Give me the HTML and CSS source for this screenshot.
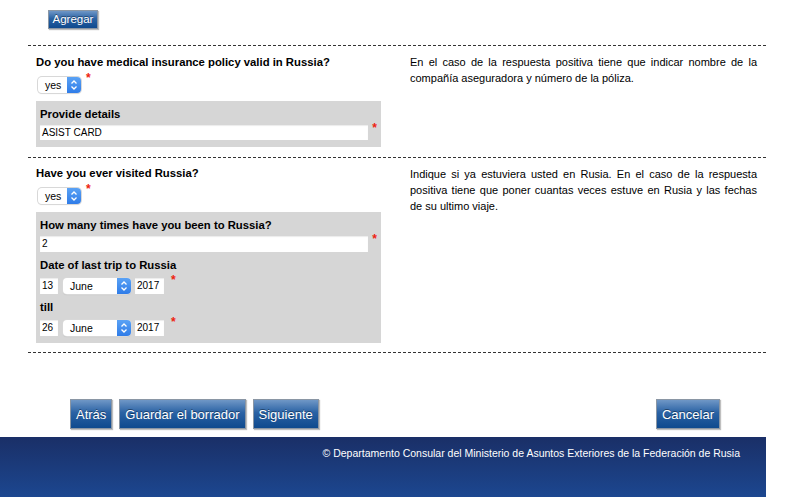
FILE: index.html
```html
<!DOCTYPE html>
<html>
<head>
<meta charset="UTF-8">
<title>Anketa</title>
<link rel="stylesheet" href="styles.css">
</head>
<body>

<div class="page">
	<div class="top">
		<button type="button" class="btn btn-small">Agregar</button>
	</div>

	<!-- seguro medico -->
	<div class="section section-1">
		<div class="left">
			<div class="question">Do you have medical insurance policy valid in Russia?</div>
			<div class="sel-row">
				<span class="sel sel-yes">yes<span class="sel-arrow"><svg width="8" height="12" viewBox="0 0 8 12"><path d="M1.5 4.5 L4 2 L6.5 4.5 M1.5 7.5 L4 10 L6.5 7.5" fill="none" stroke="#fff" stroke-width="1.3"/></svg></span></span>
				<span class="req">*</span>
			</div>
			<div class="graybox">
				<div class="sub">Provide details</div>
				<div class="field-row">
					<span class="txt txt-wide">ASIST CARD</span>
					<span class="req">*</span>
				</div>
			</div>
		</div>
		<div class="help">En el caso de la respuesta positiva tiene que indicar nombre de la compañía aseguradora y número de la póliza.</div>
	</div>

	<!-- visitas -->
	<div class="section section-2">
		<div class="left">
			<div class="question">Have you ever visited Russia?</div>
			<div class="sel-row">
				<span class="sel sel-yes">yes<span class="sel-arrow"><svg width="8" height="12" viewBox="0 0 8 12"><path d="M1.5 4.5 L4 2 L6.5 4.5 M1.5 7.5 L4 10 L6.5 7.5" fill="none" stroke="#fff" stroke-width="1.3"/></svg></span></span>
				<span class="req">*</span>
			</div>
			<div class="graybox">
				<div class="sub">How many times have you been to Russia?</div>
				<div class="field-row">
					<span class="txt txt-wide txt-tall">2</span>
					<span class="req">*</span>
				</div>
				<div class="sub sub-gap">Date of last trip to Russia</div>
				<div class="date-row">
					<span class="txt txt-day">13</span>
					<span class="sel sel-month">June<span class="sel-arrow"><svg width="8" height="12" viewBox="0 0 8 12"><path d="M1.5 4.5 L4 2 L6.5 4.5 M1.5 7.5 L4 10 L6.5 7.5" fill="none" stroke="#fff" stroke-width="1.3"/></svg></span></span>
					<span class="txt txt-year">2017</span>
					<span class="req">*</span>
				</div>
				<div class="sub sub-gap">till</div>
				<div class="date-row">
					<span class="txt txt-day">26</span>
					<span class="sel sel-month">June<span class="sel-arrow"><svg width="8" height="12" viewBox="0 0 8 12"><path d="M1.5 4.5 L4 2 L6.5 4.5 M1.5 7.5 L4 10 L6.5 7.5" fill="none" stroke="#fff" stroke-width="1.3"/></svg></span></span>
					<span class="txt txt-year">2017</span>
					<span class="req">*</span>
				</div>
			</div>
		</div>
		<div class="help">Indique si ya estuviera usted en Rusia. En el caso de la respuesta positiva tiene que poner cuantas veces estuve en Rusia y las fechas de su ultimo viaje.</div>
	</div>
	<div class="section-end"></div>

	<div class="buttons">
		<div class="btn-group">
			<button type="button" class="btn">Atrás</button>
			<button type="button" class="btn">Guardar el borrador</button>
			<button type="button" class="btn">Siguiente</button>
		</div>
		<button type="button" class="btn">Cancelar</button>
	</div>

	<div class="footer">© Departamento Consular del Ministerio de Asuntos Exteriores de la Federación de Rusia</div>
</div>

</body>
</html>
```

FILE: styles.css
```css
body
{
	margin: 0;
	background-color: #fff;
	font-family: "Liberation Sans", Arial, sans-serif;
	color: #000;
}
.page { width: 766px; }

.top { height: 45px; padding-left: 48px; padding-top: 9px; box-sizing: border-box; }

.btn
{
	font-family: "Liberation Sans", Arial, sans-serif;
	font-size: 13px;
	color: #fff;
	height: 30px;
	padding: 0 5px;
	border: 1px solid #8a96a4;
	border-radius: 0;
	background: linear-gradient(#6f97c6, #2a62a4 45%, #0f4a8e);
	text-shadow: 0 -1px 0 rgba(0, 0, 0, 0.4);
	box-shadow: 1px 1px 1px rgba(0, 0, 0, 0.25);
}
.btn-small { font-size: 11.5px; height: 19px; width: 50px; padding: 0; }

.section
{
	margin-left: 28px;
	border-top: 1px dashed #333;
	display: flex;
	padding-bottom: 9px;
}
.section-1 { padding-bottom: 10px; }
.section-end { margin-left: 28px; border-top: 1px dashed #333; }

.left { width: 345px; margin-left: 8px; padding-top: 7px; }
.section-2 .left { padding-top: 6px; }
.question { font-size: 11.3px; font-weight: bold; line-height: 18px; }
.help
{
	width: 347px;
	margin-left: 29px;
	padding-top: 8px;
	font-size: 11px;
	line-height: 16px;
	text-align: justify;
}

.sel-row { display: flex; align-items: flex-start; margin-top: 6px; margin-left: 2px; height: 16px; }

.sel
{
	position: relative;
	display: inline-block;
	box-sizing: border-box;
	height: 16px;
	line-height: 16px;
	font-size: 10.5px;
	background: #fff;
	border-radius: 4px;
	box-shadow: 0 0 0 1px #d8d8d8, 0 1px 1px rgba(0, 0, 0, 0.15);
	padding-left: 7px;
}
.sel-yes { width: 43px; }
.sel-month { width: 68px; margin-left: 5px; padding-left: 7px; }
.sel-arrow
{
	position: absolute;
	right: 0;
	top: 0;
	width: 14px;
	height: 16px;
	background: linear-gradient(#5aa2f5, #2f7ce8);
	border-radius: 0 4px 4px 0;
	display: flex;
	align-items: center;
	justify-content: center;
}

.req { color: #e21; font-size: 12px; line-height: 10px; margin-left: 5px; margin-top: -4px; font-weight: bold; }

.graybox
{
	background-color: #d6d6d6;
	margin-top: 8px;
	padding: 4px 4px 7px 4px;
}
.sub { font-size: 11.3px; font-weight: bold; line-height: 18px; }
.sub-gap { margin-top: 4px; }

.field-row { display: flex; align-items: flex-start; margin-top: 2px; }
.field-row .req { margin-left: 4px; margin-top: -2px; }

.txt
{
	display: inline-block;
	box-sizing: border-box;
	background: #fff;
	font-size: 10px;
	height: 16px;
	line-height: 16px;
	padding-left: 2px;
	box-shadow: inset 0 1px 1px rgba(0, 0, 0, 0.08);
}
.txt-wide { width: 330px; height: 15px; line-height: 15px; }
.txt-tall { height: 16px; line-height: 16px; }
.txt-day { width: 18px; }
.txt-year { width: 29px; margin-left: 4px; }

.date-row { display: flex; align-items: flex-start; margin-top: 4px; }
.date-row .req { margin-left: 7px; margin-top: -3px; }

.buttons
{
	display: flex;
	justify-content: space-between;
	margin-top: 46px;
	padding-left: 70px;
	padding-right: 46px;
}
.btn-group { display: flex; gap: 7px; }

.footer
{
	margin-top: 8px;
	height: 60px;
	box-sizing: border-box;
	background: linear-gradient(#1a2f67, #1c4790);
	color: #fff;
	font-size: 10.5px;
	text-align: right;
	padding-right: 26px;
	padding-top: 10px;
}
```
